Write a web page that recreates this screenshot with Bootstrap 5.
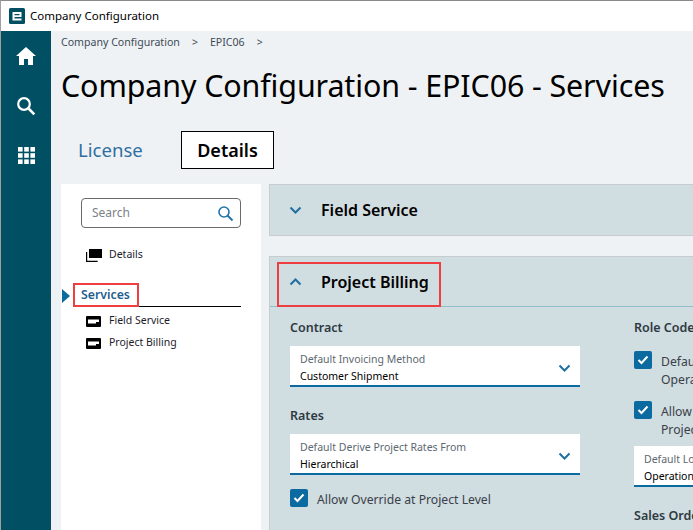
<!DOCTYPE html>
<html lang="en"><head><meta charset="utf-8"><title>Company Configuration</title>
<link href="https://cdn.jsdelivr.net/npm/bootstrap@5.3.0/dist/css/bootstrap.min.css" rel="stylesheet">
<style>
html,body{height:530px;overflow:hidden}
body{font-family:"Noto Sans","Open Sans",sans-serif;background:#fff;color:#000;border-top:1px solid #8a8a8a;border-left:1px solid #a0a0a0}
.app-title{height:30px;font-size:11.5px;padding-left:8px;gap:5px}
.app-body{height:499px}
.rail{width:50px;background:#004f63;padding-top:16px;gap:31px}
.rail svg{display:block}
.main-area{background:#eff2f5;min-width:0;overflow:hidden;padding-left:10px}
.crumbs{font-size:10.6px;color:#3d4a55;height:22px;padding-top:4px}
.crumbs span{margin-right:12px}
.page-h{font-size:30.4px;line-height:40px;margin:13px 0 0 0;font-weight:400;white-space:nowrap;letter-spacing:-.1px}
.tabs{margin-top:25px;height:38px;padding-left:6px}
.tab-off{font-size:18.6px;color:#2f6f9f;padding:0 11px;line-height:38px;width:114px}
.tab-on{font-size:18px;font-weight:600;border:1px solid #000;background:#fff;width:93px;text-align:center;line-height:36px}
.body-split{margin-top:15px;gap:8px;width:760px;height:346px}
.side{width:200px;background:#fff;padding:14px 20px;flex:none}
.sbox{height:30px;border:1px solid #6a6a6a;border-radius:4px;padding:0 6px 0 10px;font-size:12px;color:#7a8288}
.side-row{font-size:10.5px;gap:7px;color:#1c1c2c;height:22px}
.row-first{margin-top:16px}
.row-field{margin-top:3px}
.ico-w{width:16px;margin-left:5px;flex:none}
.svc{margin-top:18px;position:relative;border-bottom:1px solid #000;height:23px;font-size:12.3px;font-weight:600;color:#1f5f8f;line-height:22px}
.svc-tag{position:absolute;left:-8px;top:-1px;height:24px;width:66px;border:2px solid #ef3e42;padding-left:6px;line-height:20px}
.svc-arrow{position:absolute;left:-19px;top:5px;border-left:8px solid #0b6a9f;border-top:7px solid transparent;border-bottom:7px solid transparent}
.panes{min-width:0;flex:1}
.acc{background:#d0dde1;border:1px solid #c6cccf;border-right:0}
.acc-head{height:50px;padding-left:19px;font-size:16px;font-weight:600;gap:19px;position:relative}
.acc-two{margin-top:20px;height:300px}
.acc-two .acc-head{height:50px;border-bottom:1px solid #8ebfca}
.red-box{position:absolute;left:7px;top:5px;width:164px;height:45px;border:2px solid #ef3e42}
.form-cols{padding:11px 0 0 20px;gap:54px}
.fcol{width:290px;flex:none}
.sec-lab{font-size:12.5px;font-weight:600;color:#2e3a42;line-height:20px;margin-bottom:8px}
.lab-roomy{margin-bottom:13px}
.sel{height:41px;background:#fff;border-bottom:2px solid #0b6a9f;padding:5px 10px 0 10px;position:relative;font-size:10.5px;line-height:17px}
.sel div:first-child{color:#5d6870}
.sel svg{position:absolute;right:9px;top:18px}
.gap-sec{margin-top:19px}
.gap-rates{margin-top:19px}
.chk-row{font-size:12.2px;color:#3a4048;gap:9px;line-height:18px}
.chk-txt{padding-top:2px}
.chk-single{margin-top:14px}
.chk-gap{margin-bottom:12px}
.chk-last{margin-bottom:7px}
.chk{width:18px;height:18px;background:#0b6a9f;border-radius:2px;flex:none;display:flex;align-items:center;justify-content:center}
</style></head>
<body>
<div class="app-title d-flex align-items-center">
<svg width="16" height="16" viewBox="0 0 16 16"><rect width="16" height="16" rx="1.500" fill="#004f63"/><path d="M3.500 4h9v5h-7v1.500h7V12.500h-9z M5.500 6v1.200h5V6z" fill="#fff" fill-rule="evenodd"/></svg>
<span>Company Configuration</span></div>
<div class="app-body d-flex">
<nav class="rail d-flex flex-column align-items-center flex-shrink-0">
<svg width="20" height="18" viewBox="0 0 20 18"><path d="M10 0 0 9h3v9h5v-6h4v6h5V9h3z" fill="#fff"/></svg>
<svg width="20" height="20" viewBox="0 0 20 20"><circle cx="8" cy="8" r="5.800" fill="none" stroke="#fff" stroke-width="2.200"/><path d="m12.500 12.500 5.800 5.800" stroke="#fff" stroke-width="2.600"/></svg>
<svg width="17" height="17" viewBox="0 0 17 17" fill="#fff"><rect width="4.600" height="4.600"/><rect x="6.200" width="4.600" height="4.600"/><rect x="12.400" width="4.600" height="4.600"/><rect y="6.200" width="4.600" height="4.600"/><rect x="6.200" y="6.200" width="4.600" height="4.600"/><rect x="12.400" y="6.200" width="4.600" height="4.600"/><rect y="12.400" width="4.600" height="4.600"/><rect x="6.200" y="12.400" width="4.600" height="4.600"/><rect x="12.400" y="12.400" width="4.600" height="4.600"/></svg>
</nav>
<main class="main-area flex-grow-1">
<div class="crumbs"><span>Company Configuration</span><span>&gt;</span><span>EPIC06</span><span>&gt;</span></div>
<h1 class="page-h">Company Configuration - EPIC06 - Services</h1>
<div class="tabs d-flex"><div class="tab-off">License</div><div class="tab-on">Details</div></div>
<div class="body-split d-flex">
<aside class="side">
<div class="sbox d-flex align-items-center justify-content-between"><span>Search</span>
<svg width="17" height="17" viewBox="0 0 17 17"><circle cx="7" cy="7" r="5" fill="none" stroke="#2473a8" stroke-width="1.600"/><path d="m10.500 10.500 5 5" stroke="#2473a8" stroke-width="2"/></svg></div>
<div class="side-row row-first d-flex align-items-center"><span class="ico-w"><svg width="16" height="13" viewBox="0 0 16 13"><path d="M3 0h13v9H3z" fill="#000"/><path d="M.6 3v9.400h11" fill="none" stroke="#000" stroke-width="1.200"/></svg></span><span>Details</span></div>
<div class="svc"><span class="svc-arrow"></span><span class="svc-tag">Services</span></div>
<div class="side-row row-field d-flex align-items-center"><span class="ico-w"><svg width="15" height="11" viewBox="0 0 15 11"><rect width="15" height="11" rx="1" fill="#000"/><path d="M2 3.500h11v2.500H10v1.500H2z" fill="#fff"/></svg></span><span>Field Service</span></div>
<div class="side-row d-flex align-items-center"><span class="ico-w"><svg width="15" height="11" viewBox="0 0 15 11"><rect width="15" height="11" rx="1" fill="#000"/><path d="M2 3.500h11v2.500H10v1.500H2z" fill="#fff"/></svg></span><span>Project Billing</span></div>
</aside>
<section class="panes">
<div class="acc"><div class="acc-head d-flex align-items-center">
<svg width="13" height="8" viewBox="0 0 13 8"><path d="m1.500 1.500 5 5 5-5" fill="none" stroke="#1f6f9f" stroke-width="2"/></svg><span>Field Service</span></div></div>
<div class="acc acc-two"><div class="acc-head d-flex align-items-center"><span class="red-box"></span>
<svg width="13" height="8" viewBox="0 0 13 8"><path d="m1.500 6.500 5-5 5 5" fill="none" stroke="#1f6f9f" stroke-width="2"/></svg><span>Project Billing</span></div>
<div class="form-cols d-flex">
<div class="fcol">
<div class="sec-lab">Contract</div>
<div class="sel"><div>Default Invoicing Method</div><div>Customer Shipment</div><svg width="13" height="8" viewBox="0 0 13 8"><path d="m1.500 1.500 5 5 5-5" fill="none" stroke="#1f6f9f" stroke-width="2"/></svg></div>
<div class="sec-lab gap-rates">Rates</div>
<div class="sel"><div>Default Derive Project Rates From</div><div>Hierarchical</div><svg width="13" height="8" viewBox="0 0 13 8"><path d="m1.500 1.500 5 5 5-5" fill="none" stroke="#1f6f9f" stroke-width="2"/></svg></div>
<div class="chk-row chk-single d-flex"><span class="chk"><svg width="12" height="10" viewBox="0 0 12 10"><path d="m1.500 5 3 3 6-6.500" fill="none" stroke="#fff" stroke-width="2"/></svg></span><span class="chk-txt">Allow Override at Project Level</span></div>
</div>
<div class="fcol">
<div class="sec-lab lab-roomy">Role Code</div>
<div class="chk-row chk-gap d-flex"><span class="chk"><svg width="12" height="10" viewBox="0 0 12 10"><path d="m1.500 5 3 3 6-6.500" fill="none" stroke="#fff" stroke-width="2"/></svg></span><span class="chk-txt">Default Role Code from<br>Operation</span></div>
<div class="chk-row chk-last d-flex"><span class="chk"><svg width="12" height="10" viewBox="0 0 12 10"><path d="m1.500 5 3 3 6-6.500" fill="none" stroke="#fff" stroke-width="2"/></svg></span><span class="chk-txt">Allow Override at<br>Project Level</span></div>
<div class="sel"><div>Default Lookup</div><div>Operation</div></div>
<div class="sec-lab gap-sec">Sales Order</div>
</div>
</div></div>
</section>
</div>
</main>
</div>
<script src="https://cdn.jsdelivr.net/npm/bootstrap@5.3.0/dist/js/bootstrap.bundle.min.js"></script>
</body></html>
